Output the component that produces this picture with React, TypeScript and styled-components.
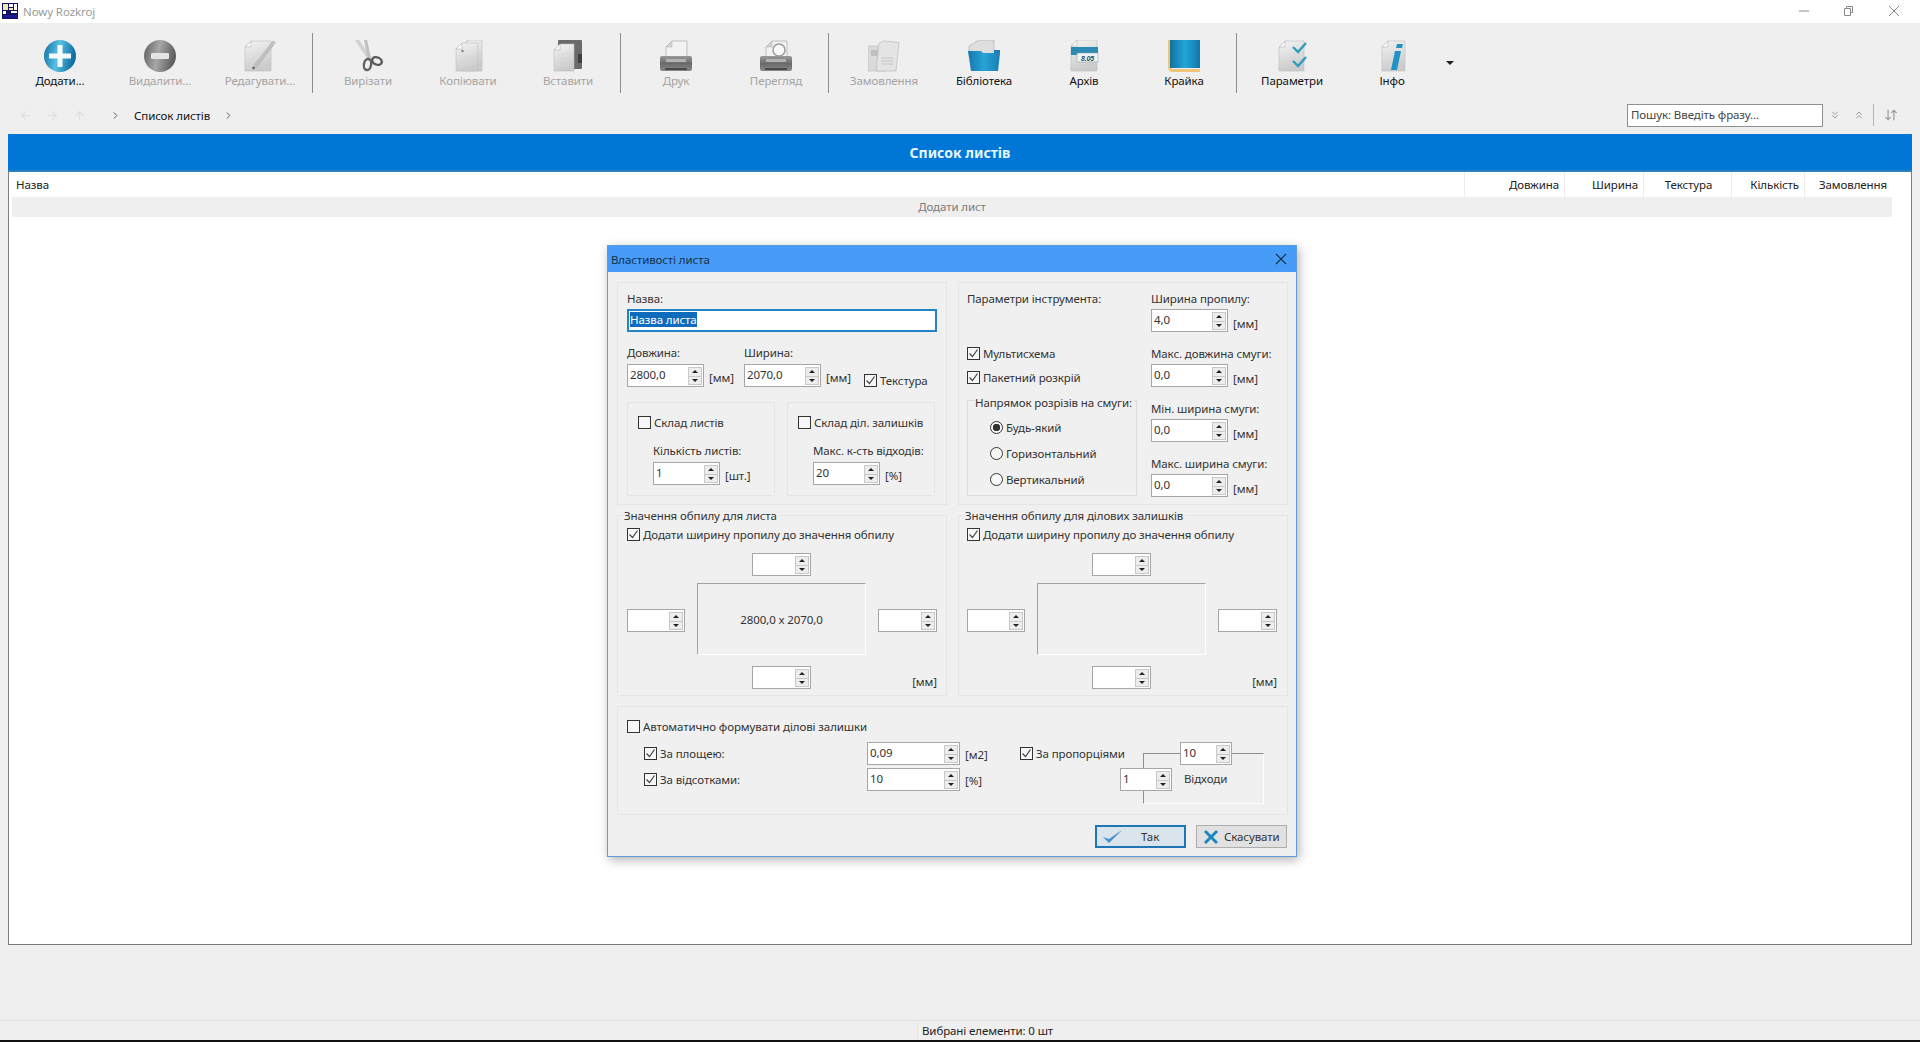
import React from 'react';
import styled, { createGlobalStyle } from 'styled-components';
import { ArrowDownUp, ArrowLeft, ArrowRight, ArrowUp, ChevronRight, ChevronsDown, ChevronsUp } from 'lucide-react';

const GlobalStyle = createGlobalStyle`
  html, body {
    margin: 0;
    padding: 0;
    background: #efefef;
    font-family: "Noto Sans", "Liberation Sans", sans-serif;
    font-size: 11.5px;
    letter-spacing: -0.1px;
    color: #222;
  }
  * { box-sizing: border-box; }
`;

/* ---------- toolbar drawings ---------- */

const Sheet = ({ x = 5, w = 22, y = 1 }: { x?: number; w?: number; y?: number }) => (
  <>
    <defs>
      <linearGradient id="sheetFill" x1="0" y1="0" x2="0.3" y2="1">
        <stop offset="0" stopColor="#f4f4f4" />
        <stop offset="1" stopColor="#cbcbcb" />
      </linearGradient>
    </defs>
    <path d={`M${x + 6} ${y}H${x + w}V31H${x}V${y + 6}Z`} fill="url(#sheetFill)" stroke="#bcbcbc" strokeWidth="0.6" />
    <path d={`M${x + 6} ${y}V${y + 6}H${x}Z`} fill="#fbfbfb" stroke="#b4b4b4" strokeWidth="0.6" />
  </>
);

const Sphere = ({ id, light, dark, minus }: { id: string; light: string; dark: string; minus?: boolean }) => (
  <svg width="32" height="32" viewBox="0 0 32 32">
    <defs>
      <linearGradient id={id} x1="0" y1="0" x2="1" y2="0.2">
        <stop offset="0" stopColor={dark} />
        <stop offset="0.5" stopColor={light} />
        <stop offset="1" stopColor={dark} />
      </linearGradient>
    </defs>
    <ellipse cx="16" cy="16" rx="16" ry="16" fill={`url(#${id})`} />
    {minus ? (
      <rect x="7" y="13" width="18" height="6" rx="1" fill="#e4e4e4" />
    ) : (
      <path d="M13.5 5h5v8.5H27v5h-8.5V27h-5v-8.5H5v-5h8.5z" fill="#f3fbff" />
    )}
  </svg>
);

const EditIcon = () => (
  <svg width="32" height="32" viewBox="0 0 32 32">
    <Sheet x={1} w={26} />
    <path d="M29 1l2.4 1.6L13 27l-3.4 1.6.8-3.6z" fill="#c2c2c2" stroke="#a2a2a2" strokeWidth="0.5" />
    <circle cx="9.5" cy="28" r="1.2" fill="#555" />
  </svg>
);

const ScissorsIcon = () => (
  <svg width="32" height="32" viewBox="0 0 32 32">
    <path d="M3 0l4-.5L19 18l-3 2z" fill="#d2d2d2" />
    <path d="M12 0l3-.5 4 19-3 1z" fill="#c0c0c0" />
    <ellipse cx="15.5" cy="24.5" rx="3.6" ry="5.6" fill="none" stroke="#626262" strokeWidth="2.4" transform="rotate(10 15.5 24.5)" />
    <ellipse cx="25" cy="21" rx="5" ry="3.6" fill="none" stroke="#5a5a5a" strokeWidth="2.4" transform="rotate(25 25 21)" />
  </svg>
);

const CopyIcon = () => (
  <svg width="32" height="32" viewBox="0 0 32 32">
    <Sheet x={10} w={20} y={0} />
    <Sheet x={4} w={22} y={3} />
    <circle cx="10.5" cy="11" r="1.2" fill="#808080" />
    <path d="M8 16h16M8 20h16M8 24h16" stroke="#d8d8d8" strokeWidth="0.8" />
  </svg>
);

const PasteIcon = () => (
  <svg width="32" height="32" viewBox="0 0 32 32">
    <rect x="6" y="0" width="24" height="29" rx="1" fill="#6a6a6a" />
    <rect x="26" y="14" width="4" height="9" fill="#3f3f3f" />
    <Sheet x={2} w={20} y={4} />
    <path d="M6 14h14M6 18h14M6 22h14M6 26h14" stroke="#d4d4d4" strokeWidth="0.8" />
  </svg>
);

const PrinterIcon = ({ id, lens }: { id: string; lens?: boolean }) => (
  <svg width="32" height="32" viewBox="0 0 32 32">
    <defs>
      <linearGradient id={id} x1="0" y1="0" x2="0" y2="1">
        <stop offset="0" stopColor="#9a9a9a" />
        <stop offset="0.5" stopColor="#6a6a6a" />
        <stop offset="1" stopColor="#8a8a8a" />
      </linearGradient>
    </defs>
    <path d="M12 1h15v19H6V7z" fill="#f2f2f2" stroke="#adadad" strokeWidth="0.7" />
    <path d="M12 1v6H6z" fill="#d4d4d4" stroke="#adadad" strokeWidth="0.5" />
    {lens && <circle cx="19" cy="10" r="6" fill="#fafafa" stroke="#9c9c9c" strokeWidth="1.5" />}
    <rect x="0" y="16" width="32" height="15" rx="2" fill={`url(#${id})`} />
    <rect x="6" y="19" width="20" height="3" fill="#b2b2b2" />
    <rect x="5" y="28" width="22" height="2" fill="#4a4a4a" />
  </svg>
);

const OrdersIcon = () => (
  <svg width="32" height="32" viewBox="0 0 32 32">
    <rect x="0" y="6" width="18" height="25" fill="#dadada" stroke="#b8b8b8" strokeWidth="0.6" />
    <rect x="3" y="10" width="9" height="6" fill="#c0c0c0" />
    <path d="M16 1l15 1.5-3 28.5H8L11 3z" fill="#e4e4e4" stroke="#b4b4b4" strokeWidth="0.6" />
    <path d="M13 18h12M13 21h12M13 24h12" stroke="#bcbcbc" strokeWidth="0.8" />
  </svg>
);

const FolderIcon = () => (
  <svg width="32" height="32" viewBox="0 0 32 32">
    <defs>
      <linearGradient id="folderBlue" x1="0" y1="0" x2="1" y2="0">
        <stop offset="0" stopColor="#1677ae" />
        <stop offset="0.5" stopColor="#27a3d6" />
        <stop offset="1" stopColor="#1a7db5" />
      </linearGradient>
    </defs>
    <path d="M11 0h15v14H1V6z" fill="#dedede" stroke="#a8a8a8" strokeWidth="0.6" />
    <path d="M26 10h6v3H26z" fill="#1a7db5" />
    <path d="M0 11l13 0 2 2h17l-2 18H3z" fill="url(#folderBlue)" />
  </svg>
);

const ArchiveIcon = () => (
  <svg width="32" height="32" viewBox="0 0 32 32">
    <Sheet x={3} w={26} y={0} />
    <rect x="3" y="7" width="27" height="8" fill="#2d8ab5" />
    <rect x="9" y="13" width="21" height="9" fill="#eef2f4" stroke="#8a9aa2" strokeWidth="0.5" />
    <text x="19.5" y="20.5" fontSize="7" fontWeight="700" fontStyle="italic" fill="#2a4a5a" textAnchor="middle" fontFamily="Liberation Sans, sans-serif">8.05</text>
  </svg>
);

const EdgeIcon = () => (
  <svg width="32" height="32" viewBox="0 0 32 32">
    <defs>
      <linearGradient id="edgeBlue" x1="0" y1="0" x2="1" y2="0">
        <stop offset="0" stopColor="#12719f" />
        <stop offset="0.5" stopColor="#22a6d8" />
        <stop offset="1" stopColor="#1376a8" />
      </linearGradient>
    </defs>
    <path d="M0 0h2v26q0 3 3 3h27v3H5q-5 0-5-5z" fill="#efc678" />
    <rect x="2" y="0" width="30" height="28" fill="url(#edgeBlue)" />
  </svg>
);

const ParamsIcon = () => (
  <svg width="32" height="32" viewBox="0 0 32 32">
    <Sheet x={3} w={25} y={1} />
    <path d="M17 7l5 5 8-9" fill="none" stroke="#2f9cbd" strokeWidth="2.4" />
    <path d="M17 21l5 5 8-9" fill="none" stroke="#2f9cbd" strokeWidth="2.4" />
  </svg>
);

const InfoIcon = () => (
  <svg width="32" height="32" viewBox="0 0 32 32">
    <Sheet x={6} w={23} y={1} />
    <path d="M21 4h6l-1 4h-6zM19 11h6l-4 19h-6z" fill="#1f93c4" />
  </svg>
);

const AppLogo = () => (
  <svg width="16" height="16" viewBox="0 0 16 16">
    <rect width="16" height="16" fill="#101060" />
    <rect x="1" y="1" width="5" height="6" fill="#f4e9a8" />
    <rect x="7" y="1" width="4" height="3" fill="#fff" />
    <rect x="12" y="1" width="3" height="6" fill="#fff" />
    <rect x="7" y="5" width="4" height="2" fill="#f4e9a8" />
    <rect x="1" y="8" width="3" height="3" fill="#fff" />
    <rect x="9" y="8" width="6" height="2" fill="#fff" />
    <rect x="1" y="12" width="14" height="3" fill="#1a1a90" />
  </svg>
);

/* ---------- layout ---------- */

const Page = styled.div`
  position: relative;
  width: 1920px;
  height: 1042px;
  overflow: hidden;
  display: flex;
  flex-direction: column;
  background: #efefef;
`;

const TitleBar = styled.header`
  height: 23px;
  background: #fff;
  display: flex;
  align-items: center;
  padding: 0 0 1px 2px;
  color: #9a9a9a;
  gap: 5px;
`;

const WindowControls = styled.div`
  margin-left: auto;
  display: flex;
  align-items: center;
  padding-right: 17px;
  gap: 27px;
  color: #8a8a8a;
  svg { width: 18px; height: 12px; display: block; }
`;

const Toolbar = styled.nav`
  height: 74px;
  padding: 17px 0 0 10px;
  display: flex;
  align-items: flex-start;
`;

const ToolButton = styled.div<{ $disabled?: boolean }>`
  width: 100px;
  display: flex;
  flex-direction: column;
  align-items: center;
  color: ${({ $disabled }) => ($disabled ? '#a4a4a4' : '#111')};
  svg { display: block; }
`;

const ToolLabel = styled.span`
  height: 18px;
  line-height: 18px;
  white-space: nowrap;
`;

const ToolSeparator = styled.div`
  width: 1px;
  height: 60px;
  margin: -7px 5px 0 2px;
  background: #8c8c8c;
`;

const MoreArrow = styled.div`
  width: 0;
  height: 0;
  margin: 21px 0 0 4px;
  border-left: 4px solid transparent;
  border-right: 4px solid transparent;
  border-top: 4px solid #222;
`;

const NavRow = styled.div`
  height: 37px;
  display: flex;
  align-items: center;
  padding-left: 19px;
  padding-bottom: 1px;
`;

const NavArrows = styled.div`
  display: flex;
  gap: 14px;
  color: #dedede;
  width: 91px;
`;

const Crumb = styled.span`
  margin: 0 13px;
  color: #111;
`;

const SearchBox = styled.div`
  margin-left: auto;
  width: 196px;
  height: 23px;
  background: #fff;
  border: 1px solid #8f8f8f;
  padding-left: 3px;
  line-height: 20px;
  color: #444;
`;

const SearchTools = styled.div`
  display: flex;
  align-items: center;
  padding: 0 22px 0 6px;
  color: #9a9a9a;
  gap: 12px;
`;

const SearchDivider = styled.span`
  width: 1px;
  height: 22px;
  margin: 0 -2px 0 -4px;
  background: #b4b4b4;
`;

const Main = styled.main`
  height: 811px;
  margin: 0 8px;
  display: flex;
  flex-direction: column;
`;

const BlueHeader = styled.div`
  height: 38px;
  background: #0076d6;
  border-bottom: 2px solid #2c7fb8;
  display: flex;
  align-items: center;
  justify-content: center;
  color: #e6f6ff;
  font-size: 14px;
  letter-spacing: 0;
  font-weight: 700;
`;

const TableBody = styled.div`
  flex: 1;
  background: #fff;
  border: 1px solid #7d7d7d;
  border-top: 0;
  padding-right: 19px;
`;

const HeaderRow = styled.div`
  height: 25px;
  display: grid;
  grid-template-columns: 1455px 100px 79px 88px 73px 88px;
  line-height: 25px;
  color: #222;
`;

const HeaderCell = styled.div<{ $align?: string }>`
  padding: 0 5px 0 7px;
  text-align: ${({ $align }) => $align || 'right'};
  border-left: 1px solid #ececec;
  white-space: nowrap;
  &:first-child { border-left: 0; }
`;

const AddRow = styled.div`
  height: 20px;
  margin-left: 3px;
  background: #efefef;
  color: #7a7a7a;
  text-align: center;
  line-height: 20px;
`;

const StatusBar = styled.footer`
  margin-top: auto;
  height: 22px;
  border-top: 1px solid #e2e2e2;
  border-bottom: 2px solid #111;
  padding-left: 917px;
  display: flex;
`;

const StatusText = styled.div`
  border-left: 1px solid #e6e6e6;
  padding-left: 4px;
  line-height: 19px;
  color: #222;
`;

/* ---------- dialog ---------- */

const Dialog = styled.section`
  position: absolute;
  left: 607px;
  top: 245px;
  width: 690px;
  height: 612px;
  background: #f0f0f0;
  border: 1px solid #5c9ddb;
  box-shadow: 2px 3px 10px rgba(0, 0, 0, 0.3);
`;

const DialogTitle = styled.div`
  height: 26px;
  background: #469cf6;
  display: flex;
  align-items: center;
  justify-content: space-between;
  padding: 0 9px 0 3px;
  color: #16304a;
`;

const DialogBody = styled.div`
  padding: 10px 9px 0;
  display: grid;
  grid-template-columns: 330px 330px;
  grid-template-rows: 223px 181px 109px;
  column-gap: 11px;
  row-gap: 10px;
`;

const Panel = styled.div<{ $wide?: boolean; $second?: boolean }>`
  position: relative;
  border: 1px solid #e5e5e5;
  padding: 7px 0 0 ${({ $second }) => ($second ? 8 : 9)}px;
  ${({ $wide }) => $wide && 'grid-column: 1 / 3;'}
`;

const Legend = styled.span`
  position: absolute;
  left: 6px;
  top: -8px;
  padding-right: 2px;
  background: #f0f0f0;
  line-height: 16px;
  color: #333;
  white-space: nowrap;
`;

const DirectionLegend = styled(Legend)`
  left: 7px;
  top: -6px;
`;

const FieldLabel = styled.div`
  height: 18px;
  line-height: 18px;
  color: #333;
  white-space: nowrap;
`;

const NameInput = styled.div`
  margin-top: 1px;
  width: 310px;
  height: 23px;
  background: #fff;
  border: 2px solid #2383c9;
  padding-left: 1px;
  line-height: 18px;
  color: #fff;
`;

const Selected = styled.span`
  background: #0f6cbd;
`;

const SpinBox = styled.div<{ $w: number }>`
  width: ${({ $w }) => $w}px;
  height: 23px;
  flex: none;
  display: flex;
  background: #fff;
  border: 1px solid #a6a6a6;
  padding-left: 2px;
  line-height: 19px;
  color: #333;
`;

const SpinText = styled.span`
  flex: 1;
`;

const SpinButtons = styled.div`
  width: 14px;
  margin: 2px 1px 1px 0;
  display: flex;
  flex-direction: column;
`;

const SpinButton = styled.span<{ $down?: boolean }>`
  flex: 1;
  display: flex;
  align-items: center;
  justify-content: center;
  background: #ededed;
  border: 1px solid #c8c8c8;
  ${({ $down }) => $down && 'border-top: 0;'}
  &::after {
    content: '';
    border-left: 3px solid transparent;
    border-right: 3px solid transparent;
    ${({ $down }) => ($down ? 'border-top: 3px solid #222;' : 'border-bottom: 3px solid #222;')}
  }
`;

const Spin = ({ w, value }: { w: number; value?: string }) => (
  <SpinBox $w={w}>
    <SpinText>{value}</SpinText>
    <SpinButtons>
      <SpinButton />
      <SpinButton $down />
    </SpinButtons>
  </SpinBox>
);

const Unit = styled.span`
  margin-left: 5px;
  line-height: 31px;
  color: #333;
  white-space: nowrap;
`;

const SpinRow = styled.div`
  display: flex;
  align-items: flex-start;
  height: 25px;
`;

const CheckBox = styled.span`
  width: 13px;
  height: 13px;
  flex: none;
  display: block;
  border: 1px solid #333;
  background: #f7f7f7;
  svg { display: block; }
`;

const CheckLabel = styled.label<{ $h?: number }>`
  display: flex;
  align-items: center;
  gap: 3px;
  height: ${({ $h }) => $h || 18}px;
  color: #333;
  white-space: nowrap;
`;

const Check = ({ on, children, h }: { on?: boolean; children: React.ReactNode; h?: number }) => (
  <CheckLabel $h={h}>
    <CheckBox>
      {on && (
        <svg width="11" height="11" viewBox="0 0 11 11">
          <path d="M1.5 5.5l3 3 5-7" fill="none" stroke="#444" strokeWidth="1.2" />
        </svg>
      )}
    </CheckBox>
    {children}
  </CheckLabel>
);

const RadioDot = styled.span<{ $on?: boolean }>`
  width: 13px;
  height: 13px;
  flex: none;
  border-radius: 50%;
  border: 1px solid #333;
  background: ${({ $on }) => ($on ? 'radial-gradient(circle, #333 0 3.5px, #f7f7f7 4px)' : '#f7f7f7')};
`;

const Radio = ({ on, children }: { on?: boolean; children: React.ReactNode }) => (
  <CheckLabel>
    <RadioDot $on={on} />
    {children}
  </CheckLabel>
);

const DimensionRow = styled.div`
  display: flex;
  margin-top: 12px;
`;

const DimensionField = styled.div<{ $w: number }>`
  width: ${({ $w }) => $w}px;
  ${SpinBox} { margin-top: 2px; }
`;

const TextureCell = styled.div`
  align-self: flex-end;
  margin-bottom: -2px;
`;

const StockRow = styled.div`
  display: flex;
  gap: 12px;
  margin-top: 15px;
`;

const StockPanel = styled.div`
  width: 148px;
  height: 94px;
  border: 1px solid #e5e5e5;
  padding: 10px 0 0 10px;
`;

const StockField = styled.div`
  margin: 11px 0 0 15px;
  ${SpinBox} { margin-top: 2px; }
`;

const ToolColumns = styled.div`
  display: flex;
  gap: 14px;
`;

const ToolLeft = styled.div`
  width: 170px;
`;

const Checks = styled.div`
  margin-top: 36px;
  display: flex;
  flex-direction: column;
  gap: 6px;
`;

const DirectionBox = styled.div`
  position: relative;
  margin-top: 14px;
  height: 96px;
  border: 1px solid #dcdcdc;
  padding: 17px 0 0 22px;
  display: flex;
  flex-direction: column;
  gap: 8px;
`;

const ToolRight = styled.div`
  display: grid;
  grid-template-rows: repeat(4, 43px);
  row-gap: 12px;
  ${SpinBox} { margin-top: 1px; }
`;

const TrimPanel = styled(Panel)`
  padding-top: 9px;
`;

const TrimGrid = styled.div`
  margin-top: 10px;
  display: grid;
  grid-template-columns: 58px 169px 59px;
  grid-template-rows: 23px 72px 27px;
  column-gap: 12px;
  row-gap: 7px;
  width: 310px;
`;

const TrimBox = styled.div`
  border: 1px solid #fff;
  border-top-color: #a2a2a2;
  border-left-color: #a2a2a2;
  display: flex;
  align-items: center;
  justify-content: center;
  color: #333;
`;

const SideCell = styled.div`
  display: flex;
  align-items: center;
  padding-top: 3px;
`;

const CenterCell = styled.div<{ $top?: number }>`
  display: flex;
  justify-content: center;
  padding-top: ${({ $top }) => $top || 0}px;
`;

const MmCell = styled.div`
  text-align: right;
  line-height: 40px;
  color: #333;
  grid-column: 3;
`;

const AutoPanel = styled(Panel)`
  padding-top: 10px;
`;

const AutoRows = styled.div`
  display: flex;
  margin: 7px 0 0 17px;
`;

const AutoGrid = styled.div`
  width: 376px;
  display: grid;
  grid-template-columns: 223px 93px 60px;
  grid-template-rows: 23px 23px;
  row-gap: 3px;
  ${Unit} { line-height: 25px; }
`;

const ProportionCell = styled.div`
  width: 123px;
`;

const Diagram = styled.div`
  position: relative;
  width: 121px;
  height: 51px;
  margin-top: 11px;
  border: 1px solid #fff;
  border-top-color: #8e8e8e;
  border-left-color: #8e8e8e;
`;

const DiagramSpin = styled.div<{ $left: number; $top: number }>`
  position: absolute;
  left: ${({ $left }) => $left}px;
  top: ${({ $top }) => $top}px;
`;

const DiagramLabel = styled.span`
  position: absolute;
  left: 40px;
  top: 16px;
  line-height: 18px;
  color: #333;
`;

const ButtonRow = styled.div`
  display: flex;
  justify-content: flex-end;
  gap: 10px;
  margin: 10px 9px 0 0;
`;

const DialogButton = styled.div<{ $default?: boolean }>`
  width: 91px;
  height: 23px;
  background: ${({ $default }) => ($default ? '#d9e4ec' : '#e1e1e1')};
  border: ${({ $default }) => ($default ? '2px solid #1f76b4' : '1px solid #adadad')};
  display: flex;
  align-items: center;
  gap: ${({ $default }) => ($default ? 17 : 5)}px;
  padding-left: ${({ $default }) => ($default ? 5 : 6)}px;
  color: #333;
`;

type Tool = { icon: React.ReactNode; label: string; disabled?: boolean } | 'sep';

const tools: Tool[] = [
  { icon: <Sphere id="plusBall" light="#58c0e4" dark="#0f6fa0" />, label: 'Додати...' },
  { icon: <Sphere id="minusBall" light="#a8a8a8" dark="#5e5e5e" minus />, label: 'Видалити...', disabled: true },
  { icon: <EditIcon />, label: 'Редагувати...', disabled: true },
  'sep',
  { icon: <ScissorsIcon />, label: 'Вирізати', disabled: true },
  { icon: <CopyIcon />, label: 'Копіювати', disabled: true },
  { icon: <PasteIcon />, label: 'Вставити', disabled: true },
  'sep',
  { icon: <PrinterIcon id="printA" />, label: 'Друк', disabled: true },
  { icon: <PrinterIcon id="printB" lens />, label: 'Перегляд', disabled: true },
  'sep',
  { icon: <OrdersIcon />, label: 'Замовлення', disabled: true },
  { icon: <FolderIcon />, label: 'Бібліотека' },
  { icon: <ArchiveIcon />, label: 'Архів' },
  { icon: <EdgeIcon />, label: 'Крайка' },
  'sep',
  { icon: <ParamsIcon />, label: 'Параметри' },
  { icon: <InfoIcon />, label: 'Інфо' },
];

const TrimFields = ({ size }: { size?: string }) => (
  <TrimGrid>
    <div />
    <CenterCell>
      <Spin w={59} />
    </CenterCell>
    <div />
    <SideCell>
      <Spin w={58} />
    </SideCell>
    <TrimBox>{size}</TrimBox>
    <SideCell>
      <Spin w={59} />
    </SideCell>
    <div />
    <CenterCell $top={4}>
      <Spin w={59} />
    </CenterCell>
    <MmCell>[мм]</MmCell>
  </TrimGrid>
);

const App = () => {
  return (
    <Page>
      <GlobalStyle />
      <TitleBar>
        <AppLogo />
        Nowy Rozkroj
        <WindowControls>
          <svg viewBox="0 0 18 12"><path d="M4 6h10" stroke="currentColor" fill="none" /></svg>
          <svg viewBox="0 0 18 12"><path d="M6.5 3.5V1.5h6v6h-2M4.5 3.5h6v7h-6z" stroke="currentColor" fill="none" /></svg>
          <svg viewBox="0 0 18 12"><path d="M4 1l10 10M14 1L4 11" stroke="currentColor" fill="none" /></svg>
        </WindowControls>
      </TitleBar>

      <Toolbar>
        {tools.map((tool, i) =>
          tool === 'sep' ? (
            <ToolSeparator key={i} />
          ) : (
            <ToolButton key={tool.label} $disabled={tool.disabled}>
              {tool.icon}
              <ToolLabel>{tool.label}</ToolLabel>
            </ToolButton>
          )
        )}
        <MoreArrow />
      </Toolbar>

      <NavRow>
        <NavArrows>
          <ArrowLeft size={13} />
          <ArrowRight size={13} />
          <ArrowUp size={13} />
        </NavArrows>
        <ChevronRight size={11} color="#555" />
        <Crumb>Список листів</Crumb>
        <ChevronRight size={11} color="#555" />
        <SearchBox>Пошук: Введіть фразу...</SearchBox>
        <SearchTools>
          <ChevronsDown size={12} />
          <ChevronsUp size={12} />
          <SearchDivider />
          <ArrowDownUp size={14} />
        </SearchTools>
      </NavRow>

      <Main>
        <BlueHeader>Список листів</BlueHeader>
        <TableBody>
          <HeaderRow>
            <HeaderCell $align="left">Назва</HeaderCell>
            <HeaderCell>Довжина</HeaderCell>
            <HeaderCell>Ширина</HeaderCell>
            <HeaderCell $align="center">Текстура</HeaderCell>
            <HeaderCell>Кількість</HeaderCell>
            <HeaderCell>Замовлення</HeaderCell>
          </HeaderRow>
          <AddRow>Додати лист</AddRow>
        </TableBody>
      </Main>

      <StatusBar>
        <StatusText>Вибрані елементи: 0 шт</StatusText>
      </StatusBar>

      <Dialog>
        <DialogTitle>
          Властивості листа
          <svg width="12" height="12" viewBox="0 0 12 12">
            <path d="M1 1l10 10M11 1L1 11" stroke="#16304a" strokeWidth="1.1" fill="none" />
          </svg>
        </DialogTitle>
        <DialogBody>
          <Panel>
            <FieldLabel>Назва:</FieldLabel>
            <NameInput>
              <Selected>Назва листа</Selected>
            </NameInput>
            <DimensionRow>
              <DimensionField $w={117}>
                <FieldLabel>Довжина:</FieldLabel>
                <SpinRow>
                  <Spin w={77} value="2800,0" />
                  <Unit>[мм]</Unit>
                </SpinRow>
              </DimensionField>
              <DimensionField $w={120}>
                <FieldLabel>Ширина:</FieldLabel>
                <SpinRow>
                  <Spin w={77} value="2070,0" />
                  <Unit>[мм]</Unit>
                </SpinRow>
              </DimensionField>
              <TextureCell>
                <Check on>Текстура</Check>
              </TextureCell>
            </DimensionRow>
            <StockRow>
              <StockPanel>
                <Check>Склад листів</Check>
                <StockField>
                  <FieldLabel>Кількість листів:</FieldLabel>
                  <SpinRow>
                    <Spin w={67} value="1" />
                    <Unit>[шт.]</Unit>
                  </SpinRow>
                </StockField>
              </StockPanel>
              <StockPanel>
                <Check>Склад діл. залишків</Check>
                <StockField>
                  <FieldLabel>Макс. к-сть відходів:</FieldLabel>
                  <SpinRow>
                    <Spin w={67} value="20" />
                    <Unit>[%]</Unit>
                  </SpinRow>
                </StockField>
              </StockPanel>
            </StockRow>
          </Panel>

          <Panel $second>
            <ToolColumns>
              <ToolLeft>
                <FieldLabel>Параметри інструмента:</FieldLabel>
                <Checks>
                  <Check on>Мультисхема</Check>
                  <Check on>Пакетний розкрій</Check>
                </Checks>
                <DirectionBox>
                  <DirectionLegend>Напрямок розрізів на смуги:</DirectionLegend>
                  <Radio on>Будь-який</Radio>
                  <Radio>Горизонтальний</Radio>
                  <Radio>Вертикальний</Radio>
                </DirectionBox>
              </ToolLeft>
              <ToolRight>
                {[
                  ['Ширина пропилу:', '4,0'],
                  ['Макс. довжина смуги:', '0,0'],
                  ['Мін. ширина смуги:', '0,0'],
                  ['Макс. ширина смуги:', '0,0'],
                ].map(([label, value]) => (
                  <div key={label}>
                    <FieldLabel>{label}</FieldLabel>
                    <SpinRow>
                      <Spin w={77} value={value} />
                      <Unit>[мм]</Unit>
                    </SpinRow>
                  </div>
                ))}
              </ToolRight>
            </ToolColumns>
          </Panel>

          <TrimPanel>
            <Legend>Значення обпилу для листа</Legend>
            <Check on>Додати ширину пропилу до значення обпилу</Check>
            <TrimFields size="2800,0 x 2070,0" />
          </TrimPanel>

          <TrimPanel $second>
            <Legend>Значення обпилу для ділових залишків</Legend>
            <Check on>Додати ширину пропилу до значення обпилу</Check>
            <TrimFields />
          </TrimPanel>

          <AutoPanel $wide>
            <Check>Автоматично формувати ділові залишки</Check>
            <AutoRows>
              <AutoGrid>
                <Check on h={23}>За площею:</Check>
                <Spin w={93} value="0,09" />
                <Unit>[м2]</Unit>
                <Check on h={23}>За відсотками:</Check>
                <Spin w={93} value="10" />
                <Unit>[%]</Unit>
              </AutoGrid>
              <ProportionCell>
                <Check on h={23}>За пропорціями</Check>
              </ProportionCell>
              <Diagram>
                <DiagramSpin $left={36} $top={-12}>
                  <Spin w={52} value="10" />
                </DiagramSpin>
                <DiagramSpin $left={-24} $top={14}>
                  <Spin w={52} value="1" />
                </DiagramSpin>
                <DiagramLabel>Відходи</DiagramLabel>
              </Diagram>
            </AutoRows>
          </AutoPanel>
        </DialogBody>
        <ButtonRow>
          <DialogButton $default>
            <svg width="22" height="16" viewBox="0 0 22 16">
              <path d="M1 8l6 6L20 1 7 10z" fill="#4a90c8" />
            </svg>
            Так
          </DialogButton>
          <DialogButton>
            <svg width="16" height="16" viewBox="0 0 16 16">
              <path d="M1 3l2-2 5 5 5-5 2 2-5 5 5 5-2 2-5-5-5 5-2-2 5-5z" fill="#1a86c0" />
            </svg>
            Скасувати
          </DialogButton>
        </ButtonRow>
      </Dialog>
    </Page>
  );
};

export default App;
